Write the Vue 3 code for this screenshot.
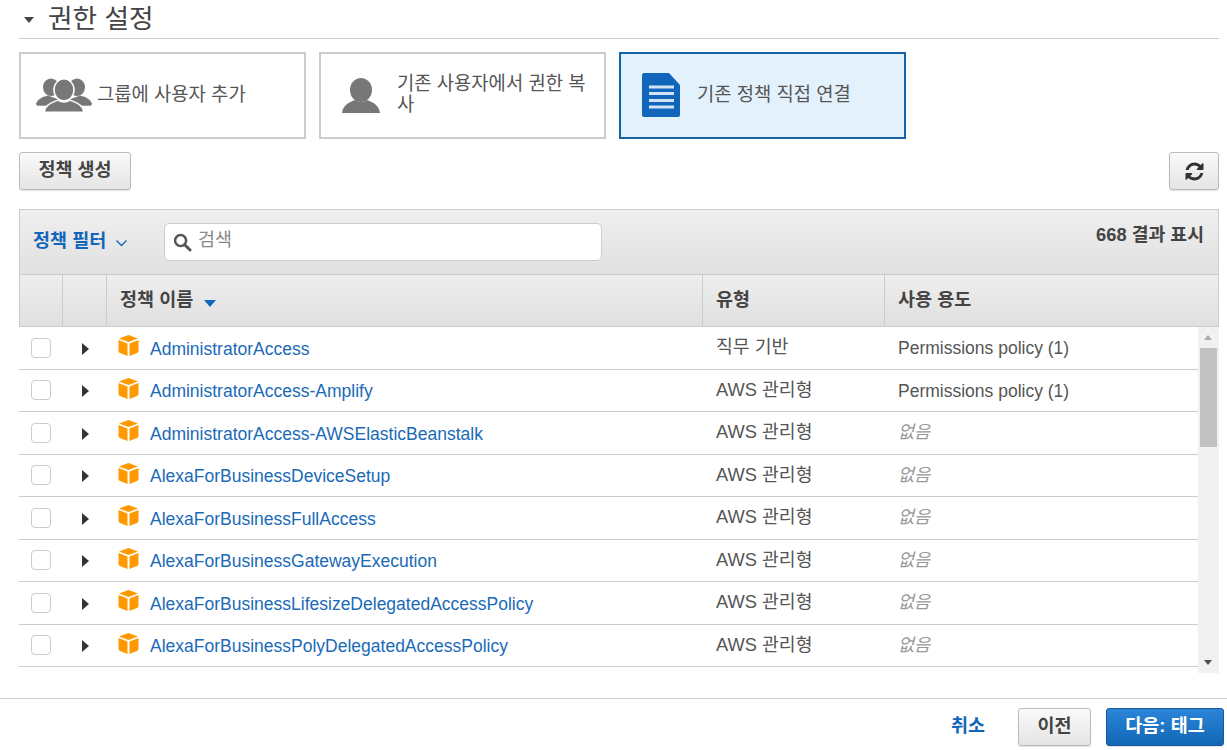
<script setup>
const rows = [
  { name: 'AdministratorAccess', type: '직무 기반', use: 'Permissions policy (1)' },
  { name: 'AdministratorAccess-Amplify', type: 'AWS 관리형', use: 'Permissions policy (1)' },
  { name: 'AdministratorAccess-AWSElasticBeanstalk', type: 'AWS 관리형', use: '' },
  { name: 'AlexaForBusinessDeviceSetup', type: 'AWS 관리형', use: '' },
  { name: 'AlexaForBusinessFullAccess', type: 'AWS 관리형', use: '' },
  { name: 'AlexaForBusinessGatewayExecution', type: 'AWS 관리형', use: '' },
  { name: 'AlexaForBusinessLifesizeDelegatedAccessPolicy', type: 'AWS 관리형', use: '' },
  { name: 'AlexaForBusinessPolyDelegatedAccessPolicy', type: 'AWS 관리형', use: '' },
]
</script>

<template>
  <div class="page">
    <div class="main">
      <div class="title">
        <span class="caret"></span>
        <h2>권한 설정</h2>
      </div>

      <div class="cards">
        <div class="card">
          <svg class="ic-group" viewBox="0 0 56 38" width="56" height="35" preserveAspectRatio="none">
            <g fill="#777">
              <ellipse cx="15" cy="10" rx="8" ry="9.500" />
              <ellipse cx="41" cy="10" rx="8" ry="9.500" />
              <path d="M0 28 C2 22 8 20 12 19 L24 24 L14 30 L1 30 Z" />
              <path d="M56 28 C54 22 48 20 44 19 L32 24 L42 30 L55 30 Z" />
            </g>
            <g fill="#777" stroke="#fff" stroke-width="1.500">
              <ellipse cx="28" cy="13" rx="10" ry="12" />
              <path d="M8 37 C9 30 14 27 22 24 Q28 28 34 24 C42 27 47 30 48 37 Z" />
            </g>
          </svg>
          <span class="label group-label">그룹에 사용자 추가</span>
        </div>
        <div class="card">
          <svg class="ic-user" viewBox="0 0 38 38" width="38" height="35" preserveAspectRatio="none">
            <g fill="#777">
              <ellipse cx="19" cy="13" rx="11" ry="13" />
              <path d="M0 38 C1 30 6 27 13 24 Q19 28 25 24 C32 27 37 30 38 38 Z" />
            </g>
          </svg>
          <span class="label user-label">기존 사용자에서 권한 복사</span>
        </div>
        <div class="card active">
          <svg class="ic-doc" viewBox="0 0 38 44" width="38" height="44">
            <path d="M2 0 H27 L38 12 V42 Q38 44 36 44 H2 Q0 44 0 42 V2 Q0 0 2 0 Z" fill="#1166bb" />
            <g fill="#cfe3f5">
              <rect x="7" y="12.500" width="25" height="3" />
              <rect x="7" y="19" width="25" height="3" />
              <rect x="7" y="26" width="25" height="3" />
              <rect x="7" y="32.500" width="25" height="3" />
            </g>
          </svg>
          <span class="label doc-label">기존 정책 직접 연결</span>
        </div>
      </div>

      <div class="toolbar">
        <button class="btn create"><span>정책 생성</span></button>
        <button class="btn refresh" aria-label="새로 고침">
          <svg viewBox="0 0 1792 1792" width="21" height="21">
            <path fill="#333" d="M1639 1056q0 5-1 7-64 268-268 434.500t-478 166.500q-146 0-282.500-55t-243.500-157l-129 129q-19 19-45 19t-45-19-19-45v-448q0-26 19-45t45-19h448q26 0 45 19t19 45-19 45l-137 137q71 66 161 102t187 36q134 0 250-65t186-179q11-17 53-117 8-23 30-23h192q13 0 22.500 9.500t9.500 22.500zm25-800v448q0 26-19 45t-45 19h-448q-26 0-45-19t-19-45 19-45l138-138q-148-137-349-137-134 0-250 65t-186 179q-11 17-53 117-8 23-30 23h-199q-13 0-22.500-9.500t-9.500-22.500v-7q65-268 270-434.500t480-166.500q146 0 284 55.500t245 156.500l130-129q19-19 45-19t45 19 19 45z" />
          </svg>
        </button>
      </div>

      <div class="table">
        <div class="filterbar">
          <span class="filter">정책 필터
            <svg viewBox="0 0 12 8" width="13" height="8"><path d="M1 1.500 L6 6.500 L11 1.500" fill="none" stroke="#1166bb" stroke-width="1.300" /></svg>
          </span>
          <div class="search">
            <svg viewBox="0 0 20 20" width="19" height="19">
              <circle cx="8" cy="8" r="5.800" fill="none" stroke="#555" stroke-width="2.600" />
              <path d="M12.500 12.500 L18 18" stroke="#555" stroke-width="3" stroke-linecap="round" />
            </svg>
            <span>검색</span>
          </div>
          <span class="count">668 결과 표시</span>
        </div>
        <div class="thead">
          <div class="th"></div>
          <div class="th"></div>
          <div class="th pad">정책 이름 <i class="sort"></i></div>
          <div class="th pad">유형</div>
          <div class="th pad">사용 용도</div>
        </div>
        <div class="body">
          <div class="rows">
            <div v-for="r in rows" :key="r.name" class="row">
              <div class="c-check"><span class="check"></span></div>
              <div class="c-arrow"><i class="arrow"></i></div>
              <div class="c-name">
                <svg class="cube" viewBox="0 0 21 21" width="21" height="21">
                  <path d="M10.500 0 L20 3.500 L10.500 7 L1 3.500 Z" fill="#f90" />
                  <path d="M0.500 5 L9.500 8.500 V21 L2 18 Q0.500 17.500 0.500 16 Z" fill="#f90" />
                  <path d="M20.500 5 L11.500 8.500 V21 L19 18 Q20.500 17.500 20.500 16 Z" fill="#f90" />
                </svg>
                <a>{{ r.name }}</a>
              </div>
              <div class="c-type">{{ r.type }}</div>
              <div class="c-use" :class="{ none: !r.use }">
                <template v-if="r.use">{{ r.use }}</template>
                <em v-else>없음</em>
              </div>
            </div>
          </div>
          <div class="scroll">
            <i class="up"></i>
            <div class="thumb"></div>
            <i class="down"></i>
          </div>
        </div>
      </div>
    </div>

    <footer class="footer">
      <a class="cancel">취소</a>
      <button class="btn prev"><span>이전</span></button>
      <button class="btn next"><span>다음: 태그</span></button>
    </footer>
  </div>
</template>

<style>
html, body { margin: 0; background: #fff; }
</style>

<style scoped>
.page {
  width: 1227px;
  height: 750px;
  overflow: hidden;
  display: flex;
  flex-direction: column;
  background: #fff;
  color: #444;
  font-family: "Liberation Sans", "Noto Sans CJK KR", sans-serif;
  font-size: 16px;
}
.main { flex: 1; padding: 0 8px 0 19px; }
.title {
  height: 38px;
  border-bottom: 1px solid #ccc;
  display: flex;
  align-items: center;
  padding-left: 5px;
}
.title h2 {
  margin: 0 0 0 14px;
  font-size: 26.700px;
  font-weight: 400;
  line-height: 32px;
  color: #444;
}
.caret {
  width: 0; height: 0;
  border-left: 5.500px solid transparent;
  border-right: 5.500px solid transparent;
  border-top: 6px solid #444;
  margin-top: 2px;
}
.cards { display: flex; gap: 13px; margin-top: 13px; }
.card {
  width: 287px;
  height: 87px;
  box-sizing: border-box;
  border: 2px solid #ccc;
  display: flex;
  align-items: center;
  color: #555;
  font-size: 18.800px;
  line-height: 21px;
}
.card.active { background: #e3f1fd; border-color: #1464a5; }
.label { padding-bottom: 3px; }
.ic-group { margin-left: 15px; flex: none; }
.group-label { margin-left: 5px; }
.ic-user { margin-left: 21px; flex: none; }
.user-label { margin-left: 17px; width: 195px; }
.ic-doc { margin-left: 21px; flex: none; margin-bottom: 2px; }
.doc-label { margin-left: 17px; }
.toolbar { display: flex; justify-content: space-between; margin-top: 13px; }
.btn {
  height: 38px;
  box-sizing: border-box;
  border: 1px solid #bbb;
  border-radius: 3px;
  background: linear-gradient(#fafafa, #e4e4e4);
  box-shadow: 0 1px 1px rgba(0,0,0,.12);
  font: 700 18.500px "Liberation Sans", "Noto Sans CJK KR", sans-serif;
  color: #444;
  padding: 0;
  display: flex;
  align-items: center;
  justify-content: center;
}
.btn span { padding-bottom: 6px; }
.create { width: 112px; }
.refresh { width: 50px; }
.table { margin-top: 19px; width: 1200px; }
.filterbar {
  height: 66px;
  box-sizing: border-box;
  border: 1px solid #ccc;
  background: linear-gradient(#efefef, #e1e1e1);
  display: flex;
}
.filter {
  color: #1166bb;
  font-weight: 700;
  font-size: 18.500px;
  margin: 18px 0 0 13px;
  line-height: 26px;
  height: 26px;
  width: 131px;
}
.filter svg { margin-left: 4px; }
.search {
  width: 438px;
  height: 38px;
  margin-top: 13px;
  box-sizing: border-box;
  background: #fff;
  border: 1px solid #ccc;
  border-radius: 5px;
  display: flex;
  align-items: center;
  padding-left: 8px;
  color: #888;
  font-size: 18.500px;
  gap: 6px;
}
.search span { padding-bottom: 8px; }
.count {
  margin: 12px 14px 0 auto;
  font-weight: 700;
  font-size: 18.300px;
  line-height: 26px;
  height: 26px;
  color: #444;
}
.thead {
  display: grid;
  grid-template-columns: 43px 44px 596px 182px 333px;
  height: 52px;
  box-sizing: border-box;
  border: 1px solid #ccc;
  border-top: 0;
  background: linear-gradient(#eee, #e0e0e0);
}
.th {
  border-right: 1px solid #ccc;
  font-weight: 700;
  font-size: 18.500px;
  line-height: 50px;
  color: #444;
}
.th:last-child { border-right: 0; }
.th.pad { padding-left: 13px; }
.sort {
  display: inline-block;
  width: 0; height: 0;
  border-left: 6.500px solid transparent;
  border-right: 6.500px solid transparent;
  border-top: 7px solid #1166bb;
  margin-left: 6px;
  vertical-align: -1px;
}
.body { display: flex; height: 346px; }
.rows { width: 1179px; }
.row {
  display: grid;
  grid-template-columns: 43px 44px 596px 182px 314px;
  height: 42.500px;
  box-sizing: border-box;
  border-bottom: 1px solid #ccc;
  align-items: center;
  font-size: 17.500px;
}
.c-check { padding-left: 12px; display: flex; }
.check {
  width: 20px; height: 20px;
  box-sizing: border-box;
  border: 1px solid #ccc;
  border-radius: 4px;
  background: #fff;
}
.c-arrow { padding-left: 20px; display: flex; }
.arrow {
  width: 0; height: 0;
  border-top: 6px solid transparent;
  border-bottom: 6px solid transparent;
  border-left: 7px solid #333;
  margin-top: 2px;
}
.c-name { display: flex; align-items: center; padding-left: 12px; }
.cube { flex: none; margin-top: -4px; }
.c-name a { color: #1a6ab8; margin-left: 11px; line-height: 24px; margin-top: 2px; }
.c-type { padding-left: 14px; color: #555; margin-top: -5px; font-size: 18.300px; }
.c-use { padding-left: 14px; color: #555; margin-top: 2px; }
.c-use.none { margin-top: -4px; }
.c-use em { color: #999; font-style: italic; }
.scroll {
  width: 21px;
  background: #f1f1f1;
  position: relative;
}
.thumb {
  position: absolute;
  top: 21px; left: 2px; right: 2px;
  height: 99px;
  background: #c1c1c1;
}
.up, .down {
  position: absolute;
  left: 6px;
  width: 0; height: 0;
  border-left: 4.500px solid transparent;
  border-right: 4.500px solid transparent;
}
.up { top: 8px; border-bottom: 5px solid #aaa; }
.down { bottom: 8px; border-top: 5px solid #505050; }
.footer {
  height: 52px;
  box-sizing: border-box;
  border-top: 1px solid #ccc;
  display: flex;
  align-items: flex-start;
  justify-content: flex-end;
  padding: 9px 3px 0 0;
  background: #fff;
}
.cancel {
  color: #1166bb;
  font-weight: 700;
  font-size: 18.500px;
  line-height: 36px;
  margin-right: 33px;
}
.prev { width: 73px; margin-right: 15px; }
.next {
  width: 118px;
  background: linear-gradient(#2b85d8, #1266b5);
  border-color: #15599c;
  color: #fff;
}
</style>
